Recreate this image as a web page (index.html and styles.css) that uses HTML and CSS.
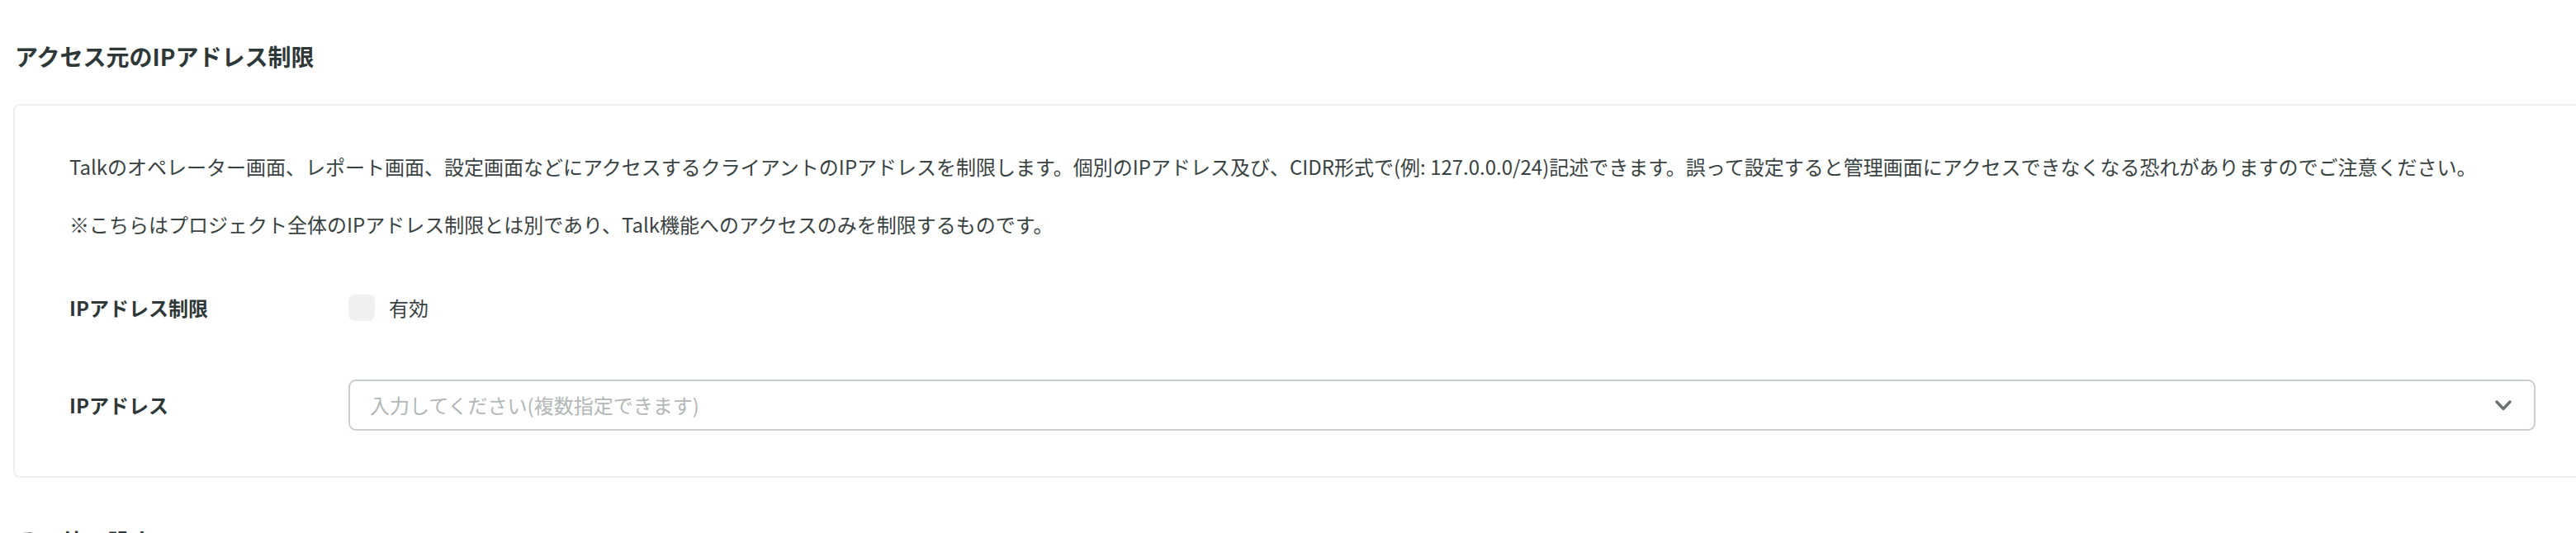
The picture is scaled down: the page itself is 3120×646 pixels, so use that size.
FILE: index.html
```html
<!DOCTYPE html>
<html lang="ja">
<head>
<meta charset="utf-8">
<title>アクセス元のIPアドレス制限</title>
<link rel="stylesheet" href="styles.css">
</head>
<body>
<main class="page">
  <section class="section">
    <h2 class="section-title">アクセス元のIPアドレス制限</h2>
    <div class="card">
      <p class="desc">Talkのオペレーター画面、レポート画面、設定画面などにアクセスするクライアントのIPアドレスを制限します。個別のIPアドレス及び、CIDR形式で(例: 127.0.0.0/24)記述できます。誤って設定すると管理画面にアクセスできなくなる恐れがありますのでご注意ください。</p>
      <p class="desc desc-note">※こちらはプロジェクト全体のIPアドレス制限とは別であり、Talk機能へのアクセスのみを制限するものです。</p>
      <div class="form">
        <div class="form-row">
          <div class="form-label">IPアドレス制限</div>
          <label class="check">
            <span class="check-box"></span>
            <span class="check-text">有効</span>
          </label>
        </div>
        <div class="form-row">
          <div class="form-label">IPアドレス</div>
          <div class="select">
            <span class="select-placeholder">入力してください(複数指定できます)</span>
            <svg class="select-chevron" viewBox="0 0 20 13" width="20" height="13" aria-hidden="true">
              <polyline points="2,2 10,10.5 18,2" fill="none" stroke="currentColor" stroke-width="3.4" stroke-linecap="round" stroke-linejoin="round"/>
            </svg>
          </div>
        </div>
      </div>
    </div>
  </section>
  <section class="section">
    <h2 class="section-title">その他の設定</h2>
  </section>
</main>
</body>
</html>
```

FILE: styles.css
```css
html, body {
  margin: 0;
  padding: 0;
  background: #ffffff;
  overflow: hidden;
}

body {
  font-family: "Noto Sans CJK JP", "Noto Sans", sans-serif;
  color: #394242;
}

.page {
  padding: 48px 0 0 16px;
}

.section + .section {
  margin-top: 57px;
}

.section-title {
  margin: 0 0 38px 2px;
  font-size: 28px;
  line-height: 40px;
  font-weight: 700;
  color: #2f3838;
}

.card {
  box-sizing: border-box;
  width: 3123px;
  border: 2px solid #efefef;
  border-radius: 8px;
  padding: 56px 66px 55px 66px;
  background: #ffffff;
}

.desc {
  margin: 0;
  font-size: 24px;
  line-height: 36px;
  color: #394242;
  white-space: nowrap;
}

.desc-note {
  margin-top: 34px;
}

.form {
  display: flex;
  flex-direction: column;
  gap: 69px;
  margin-top: 65px;
}

.form-row {
  display: flex;
  align-items: center;
}

.form-label {
  flex: 0 0 338px;
  font-size: 24px;
  line-height: 36px;
  font-weight: 700;
  color: #2f3838;
}

.check {
  display: flex;
  align-items: center;
  gap: 17px;
}

.check-box {
  width: 32px;
  height: 32px;
  border-radius: 8px;
  background: #eff1f1;
}

.check-text {
  font-size: 24px;
  line-height: 36px;
  color: #394242;
}

.select {
  flex: 1;
  box-sizing: border-box;
  height: 62px;
  display: flex;
  align-items: center;
  justify-content: space-between;
  border: 2px solid #c9cece;
  border-radius: 9px;
  padding: 0 27px 0 24px;
}

.select-placeholder {
  font-size: 24px;
  line-height: 36px;
  color: #b2b7b7;
}

.select-chevron {
  color: #687070;
  display: block;
}
```
